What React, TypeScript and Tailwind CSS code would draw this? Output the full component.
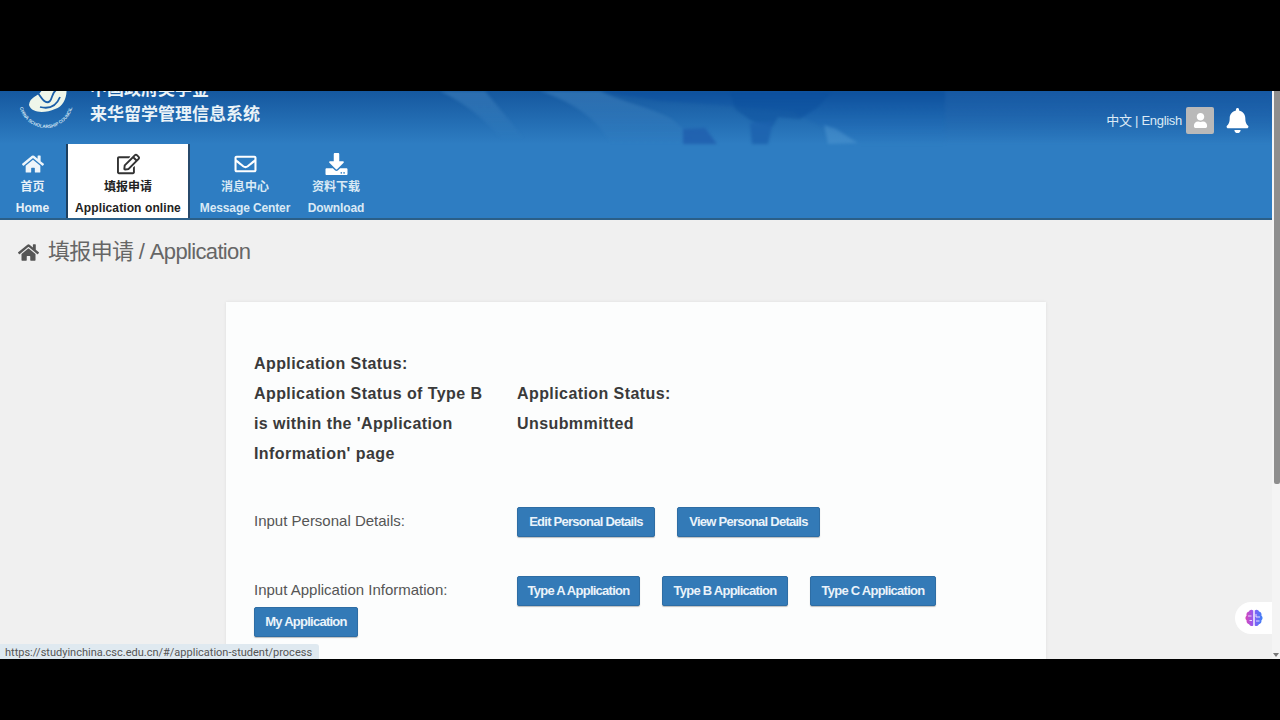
import { FaHome, FaRegEdit, FaRegEnvelope, FaDownload, FaBell, FaUser } from "react-icons/fa";

const CJK = "font-['Liberation_Sans','Noto_Sans_CJK_SC',sans-serif]";

const navItems = [
  { icon: FaRegEnvelope, zh: "消息中心", en: "Message Center", width: "w-[90px]", size: "text-[25px]" },
  { icon: FaDownload, zh: "资料下载", en: "Download", width: "w-[56px] ml-[18px]", size: "text-[23px]" },
];

const BannerArt = () => (
  <svg className="absolute left-0 top-0 h-[53px] w-[1272px] blur-[1.5px]" viewBox="0 0 1272 53" aria-hidden="true">
    <defs>
      <linearGradient id="fade" x1="0" y1="0" x2="0" y2="1">
        <stop offset="0" stopColor="#0a4c9b" stopOpacity="0.7" />
        <stop offset="1" stopColor="#1f6dbb" stopOpacity="0.05" />
      </linearGradient>
      <linearGradient id="glow" x1="0" y1="0" x2="0" y2="1">
        <stop offset="0" stopColor="#6aaadb" stopOpacity="0.28" />
        <stop offset="1" stopColor="#6aaadb" stopOpacity="0" />
      </linearGradient>
      <linearGradient id="side" x1="0" y1="0" x2="0" y2="1">
        <stop offset="0" stopColor="#1a5aa8" stopOpacity="0.5" />
        <stop offset="1" stopColor="#1a5aa8" stopOpacity="0" />
      </linearGradient>
    </defs>
    <path d="M440 0 H485 L525 48 H500 Q480 20 440 0Z" fill="url(#glow)" />
    <path d="M540 0 H600 C625 12 650 16 672 28 L700 53 H610 C600 30 575 12 540 0Z" fill="url(#glow)" />
    <path d="M600 0 H945 V53 H860 L830 40 L790 20 L720 14 L660 10Z" fill="url(#fade)" />
    <path d="M730 0 H832 L818 16 L800 28 L778 26 L772 36 L752 30 L735 18Z" fill="#0a4d9c" fillOpacity="0.5" />
    <path d="M683 38 L705 37 L717 53 H683Z" fill="#205fae" fillOpacity="0.85" />
    <path d="M750 32 L773 30 L770 44 L768 53 H752Z" fill="#1c62ae" fillOpacity="0.85" />
    <path d="M824 34 L836 38 L858 52 L828 53Z" fill="#5ba0d6" fillOpacity="0.4" />
    <rect x="945" y="0" width="327" height="53" fill="url(#side)" />
  </svg>
);

const Logo = () => (
  <svg className="absolute left-[16px] top-[-14px] h-[58px] w-[62px]" viewBox="0 0 62 58" aria-hidden="true">
    <defs>
      <path id="logoArc" d="M3 24 A27 27 0 0 0 57 24" />
    </defs>
    <text fontSize="4.6" fontWeight="700" fill="#cfe3f2" fontFamily="Liberation Sans, sans-serif">
      <textPath href="#logoArc" startOffset="50%" textAnchor="middle">CHINA SCHOLARSHIP COUNCIL</textPath>
    </text>
    <path d="M13 28 C14 18 25 20 27 10 L50 6 C52 18 49 29 39 32 C30 36 16 37 13 28Z" fill="#eef6ea" />
    <path d="M22 16 C26 22 30 28 34 24 C37 20 36 14 42 12 M24 30 C32 32 40 30 44 20" fill="none" stroke="#1b5fa8" strokeWidth="1.8" />
    <circle cx="8" cy="10" r="1" fill="#cfe3f2" />
    <circle cx="53" cy="10" r="1" fill="#cfe3f2" />
  </svg>
);

const Brain = () => (
  <svg className="h-[20px] w-[20px]" viewBox="0 0 20 20" aria-hidden="true">
    <defs>
      <linearGradient id="brain" x1="0" y1="0" x2="1" y2="0">
        <stop offset="0" stopColor="#d946b8" />
        <stop offset="0.5" stopColor="#8b5cf6" />
        <stop offset="1" stopColor="#3b82f6" />
      </linearGradient>
    </defs>
    <path d="M9.3 2.4 C7.6 1 5.4 1.8 5 3.6 C3 4 2 5.8 2.6 7.5 C1 8.8 1 11.2 2.6 12.5 C2.2 14.6 3.6 16 5.1 16.2 C5.8 18 8 18.6 9.3 17.4Z M10.7 2.4 C12.4 1 14.6 1.8 15 3.6 C17 4 18 5.8 17.4 7.5 C19 8.8 19 11.2 17.4 12.5 C17.8 14.6 16.4 16 14.9 16.2 C14.2 18 12 18.6 10.7 17.4Z" fill="url(#brain)" />
    <path d="M4 8 H7.5 M5.5 12.5 H8 M12 6 V9 H16 M12 13 H15.5" fill="none" stroke="#f3e8ff" strokeWidth="0.9" />
  </svg>
);

const ActionButton = ({ label, className = "" }: { label: string; className?: string }) => (
  <button className={`h-[30px] whitespace-nowrap rounded-[2px] border border-[#2e6da4] bg-[#337ab7] text-center text-[13px] font-bold tracking-[-0.75px] text-[#eaf3fa] shadow-[0_1px_1px_rgba(0,0,0,0.25)] ${className}`}>
    {label}
  </button>
);

export default function App() {
  return (
    <div className={`flex h-[720px] w-[1280px] flex-col overflow-hidden bg-black ${CJK}`}>
      <div className="h-[91px] shrink-0" />
      <div className="relative flex h-[568px] shrink-0 overflow-hidden">
        <div className="w-[1272px] shrink-0 bg-[#f0f0f0]">
          <header className="border-b-2 border-[#2b5f88] bg-[#2e7dc2]">
            <div className="relative h-[53px] bg-gradient-to-b from-[#15589f] to-[#2e7dc2]">
              <BannerArt />
              <Logo />
              <div className="absolute left-[90px] top-[-14px] text-[17px] font-bold leading-[25px] text-[#eaf3f8]">
                <div>中国政府奖学金</div>
                <div>来华留学管理信息系统</div>
              </div>
              <div className="absolute right-[20px] top-[16px] flex items-center">
                <span className="text-[13px] tracking-[-0.3px] text-[#dbeaf5]">中文 | English</span>
                <span className="ml-[4px] flex h-[27px] w-[28px] items-center justify-center rounded-[2px] bg-[#b9b9b9] text-[15px] text-white">
                  <FaUser />
                </span>
                <FaBell className="ml-[11px] text-[25px] text-white" />
                <span className="w-[2px]" />
              </div>
            </div>
            <nav className="flex h-[74px] items-stretch text-[12px]">
              <div className="ml-[16px] flex w-[33px] flex-col items-center text-[#e6f0f8]">
                <FaHome className="mt-[9px] h-[22px] text-[22px] text-[#eef5fa]" />
                <span className="mt-[3px] text-[12px] font-bold leading-[18px]">首页</span>
                <span className="mt-[3px] whitespace-nowrap font-bold leading-[18px]">Home</span>
              </div>
              <div className="ml-[17px] flex w-[124px] flex-col items-center border-x-2 border-[#27496b] border-l-[#1c3f5f] bg-white text-[#222]">
                <FaRegEdit className="mt-[9px] h-[22px] text-[23px] text-[#333]" />
                <span className="mt-[3px] font-bold leading-[18px]">填报申请</span>
                <span className="mt-[3px] whitespace-nowrap font-bold leading-[18px] tracking-[0.1px]">Application online</span>
              </div>
              <div className="w-[10px]" />
              {navItems.map((item) => (
                <div key={item.en} className={`flex flex-col items-center text-[#d9e9f5] ${item.width}`}>
                  <item.icon className={`mt-[9px] h-[22px] text-white ${item.size}`} />
                  <span className="mt-[3px] font-bold leading-[18px]">{item.zh}</span>
                  <span className="mt-[3px] whitespace-nowrap font-bold leading-[18px] tracking-[-0.12px]">{item.en}</span>
                </div>
              ))}
            </nav>
          </header>

          <div className="flex items-center px-[18px] pt-[16px] text-[#666]">
            <FaHome className="text-[21px] text-[#555]" />
            <span className="ml-[9px] text-[22px] leading-[32px] tracking-[-0.65px]">填报申请 / Application</span>
          </div>

          <main className="ml-[226px] mt-[34px] w-[820px] bg-[#fcfdfd] px-[28px] pb-[40px] pt-[47px] shadow-[0_0_3px_rgba(0,0,0,0.08)]">
            <div className="flex items-center text-[16px] font-bold leading-[30px] tracking-[0.42px] text-[#3a3a3a]">
              <div className="w-[263px] pr-[30px]">
                <div>Application Status:</div>
                <div>Application Status of Type B is within the 'Application Information' page</div>
              </div>
              <div>
                <div>Application Status:</div>
                <div>Unsubmmitted</div>
              </div>
            </div>

            <div className="mt-[38px] flex items-center">
              <div className="w-[263px] pb-[2px] text-[15px] text-[#555]">Input Personal Details:</div>
              <ActionButton label="Edit Personal Details" className="w-[138px]" />
              <ActionButton label="View Personal Details" className="ml-[22px] w-[143px]" />
            </div>

            <div className="mt-[39px] flex flex-wrap items-center gap-y-[1px]">
              <div className="w-[263px] pb-[2px] text-[15px] text-[#555]">Input Application Information:</div>
              <ActionButton label="Type A Application" className="mr-[22px] w-[123px]" />
              <ActionButton label="Type B Application" className="mr-[22px] w-[126px]" />
              <ActionButton label="Type C Application" className="mr-[22px] w-[126px]" />
              <ActionButton label="My Application" className="w-[104px]" />
            </div>
          </main>
        </div>

        <div className="relative w-[8px] shrink-0 bg-[#f4f4f4]">
          <div className="ml-[2px] h-[393px] w-[6px] rounded-b-[2px] bg-[#8e8e8e]" />
          <div className="absolute bottom-[2px] left-[1px] h-0 w-0 border-x-[3px] border-t-[4px] border-x-transparent border-t-[#777]" />
        </div>

        <div className="absolute left-[1235px] top-[511px] flex h-[32px] w-[37px] items-center justify-center rounded-l-full bg-white">
          <Brain />
        </div>

        <div className="absolute bottom-0 left-0 h-[15px] w-[319px] rounded-tr-[3px] bg-[#dfe9f0] pl-[5px] font-['Roboto',sans-serif] text-[11px] leading-[18px] text-[#555]">
          https://studyinchina.csc.edu.cn/#/application-student/process
        </div>
      </div>
      <div className="flex-1" />
    </div>
  );
}
